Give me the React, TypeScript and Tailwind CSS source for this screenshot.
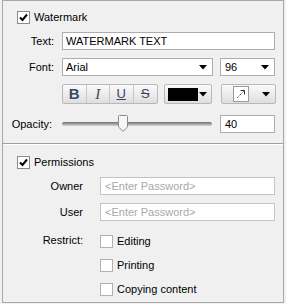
import React from "react";

function Check() {
  return (
    <div className="w-[13px] h-[13px] border border-[#8a8a8a] bg-white flex items-center justify-center shrink-0">
      <svg width="9" height="9" viewBox="0 0 9 9">
        <path d="M1 4.5 L3.5 7 L8 1.5" stroke="#000" strokeWidth="2" fill="none" />
      </svg>
    </div>
  );
}

function EmptyCheck() {
  return <div className="w-[13px] h-[13px] border border-[#b0b0b0] bg-white shrink-0" />;
}

function Arrow() {
  return (
    <svg width="8" height="5" viewBox="0 0 8 5" className="shrink-0">
      <path d="M0 0 H8 L4 4.5 Z" fill="#000" />
    </svg>
  );
}

export default function App() {
  return (
    <div className="w-[286px] h-[304px] bg-[#f0f0f0] font-['Liberation_Sans',Tahoma,sans-serif] text-[11px] text-black">
      <div className="ml-[2px] w-[282px] h-[303px] border border-[#a8a8a8] flex flex-col">
        {/* Watermark */}
        <div className="mt-[10px] pl-[14px] flex items-center gap-[4px] h-[13px]">
          <Check />
          <span>Watermark</span>
        </div>
        {/* Text */}
        <div className="mt-[8px] flex items-center h-[18px]">
          <span className="w-[51px] text-right">Text:</span>
          <div className="ml-[8px] w-[213px] h-[18px] border border-[#abadb3] bg-white flex items-center pl-[3px]">
            WATERMARK TEXT
          </div>
        </div>
        {/* Font */}
        <div className="mt-[8px] flex items-center h-[18px]">
          <span className="w-[51px] text-right">Font:</span>
          <div className="ml-[8px] w-[151px] h-[18px] border border-[#abadb3] bg-white flex items-center justify-between pl-[3px] pr-[5px]">
            <span>Arial</span>
            <Arrow />
          </div>
          <div className="ml-[7px] w-[55px] h-[18px] border border-[#abadb3] bg-white flex items-center justify-between pl-[4px] pr-[5px]">
            <span>96</span>
            <Arrow />
          </div>
        </div>
        {/* Buttons */}
        <div className="mt-[8px] flex items-center h-[20px]">
          <div className="ml-[59px] w-[96px] h-[20px] flex border border-[#b8b8b8] rounded-[2px] bg-gradient-to-b from-[#fbfbfb] to-[#dedede] text-[#3a4763]">
            <div className="w-[24px] flex items-center justify-center font-bold text-[15px] border-r border-[#c8c8c8]">B</div>
            <div className="w-[24px] flex items-center justify-center italic text-[15px] font-['Liberation_Serif',serif] border-r border-[#c8c8c8]">I</div>
            <div className="w-[24px] flex items-center justify-center underline text-[13px] border-r border-[#c8c8c8]">U</div>
            <div className="w-[24px] flex items-center justify-center line-through text-[13px]">S</div>
          </div>
          <div className="ml-[6px] w-[48px] h-[20px] border border-[#b8b8b8] rounded-[2px] bg-gradient-to-b from-[#fbfbfb] to-[#dedede] flex items-center pl-[3px] pr-[4px] justify-between">
            <div className="w-[30px] h-[13px] bg-black" />
            <Arrow />
          </div>
          <div className="ml-[9px] w-[55px] h-[20px] border border-[#b8b8b8] rounded-[2px] bg-gradient-to-b from-[#fbfbfb] to-[#dedede] flex items-center pl-[11px] pr-[5px] justify-between">
            <div className="w-[16px] h-[16px] bg-white border border-[#9a9a9a] flex items-center justify-center">
              <svg width="12" height="12" viewBox="0 0 12 12">
                <path d="M2 10 L9 3" stroke="#333" strokeWidth="1" strokeDasharray="1.2 1" fill="none" />
                <path d="M5.5 2.5 H9.5 V6.5" stroke="#333" strokeWidth="1" fill="none" />
              </svg>
            </div>
            <Arrow />
          </div>
        </div>
        {/* Opacity */}
        <div className="mt-[11px] flex items-center h-[18px]">
          <span className="w-[49px] text-right">Opacity:</span>
          <div className="ml-[10px] w-[150px] h-[18px] relative flex items-center">
            <div className="w-full h-[4px] rounded-[2px] bg-gradient-to-b from-[#8c8c8c] to-[#d4d4d4] border-t border-[#7a7a7a]" />
            <svg width="10" height="17" viewBox="0 0 10 17" className="absolute left-[56px] top-[0px]">
              <path d="M0.5 1.5 Q0.5 0.5 1.5 0.5 H8.5 Q9.5 0.5 9.5 1.5 V12 L5 16.3 L0.5 12 Z" fill="#f7f7f7" stroke="#8a8a8a" />
            </svg>
          </div>
          <div className="ml-[8px] w-[55px] h-[18px] border border-[#abadb3] bg-white flex items-center pl-[4px]">40</div>
        </div>
        {/* Separator */}
        <div className="mt-[10px] h-[2px] border-t border-[#a0a0a0] border-b border-b-white" />
        {/* Permissions */}
        <div className="mt-[11px] pl-[14px] flex items-center gap-[4px] h-[13px]">
          <Check />
          <span>Permissions</span>
        </div>
        {/* Owner */}
        <div className="mt-[8px] flex items-center h-[18px]">
          <span className="w-[80px] text-right">Owner</span>
          <div className="ml-[17px] w-[175px] h-[18px] border border-[#c4c4c4] bg-white flex items-center pl-[4px] text-[#a8a8a8]">
            &lt;Enter Password&gt;
          </div>
        </div>
        {/* User */}
        <div className="mt-[8px] flex items-center h-[18px]">
          <span className="w-[80px] text-right">User</span>
          <div className="ml-[17px] w-[175px] h-[18px] border border-[#c4c4c4] bg-white flex items-center pl-[4px] text-[#a8a8a8]">
            &lt;Enter Password&gt;
          </div>
        </div>
        {/* Restrict */}
        <div className="mt-[14px] flex items-start">
          <span className="w-[80px] text-right leading-[13px] mt-[-1px]">Restrict:</span>
          <div className="ml-[17px] flex flex-col gap-[11px]">
            <div className="flex items-center gap-[4px] h-[13px]">
              <EmptyCheck />
              <span>Editing</span>
            </div>
            <div className="flex items-center gap-[4px] h-[13px]">
              <EmptyCheck />
              <span>Printing</span>
            </div>
            <div className="flex items-center gap-[4px] h-[13px]">
              <EmptyCheck />
              <span>Copying content</span>
            </div>
          </div>
        </div>
      </div>
    </div>
  );
}
